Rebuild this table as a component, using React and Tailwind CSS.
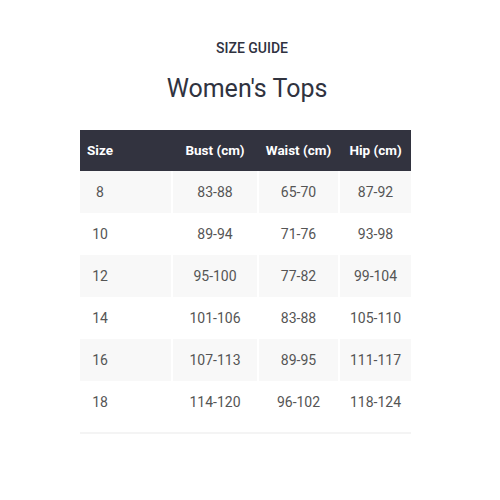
const rows = [
  ["8", "83-88", "65-70", "87-92"],
  ["10", "89-94", "71-76", "93-98"],
  ["12", "95-100", "77-82", "99-104"],
  ["14", "101-106", "83-88", "105-110"],
  ["16", "107-113", "89-95", "111-117"],
  ["18", "114-120", "96-102", "118-124"],
];

const cols = "grid grid-cols-[91px_84px_79px_71px] gap-x-[2px]";

export default function App() {
  return (
    <div className="w-[500px] h-[500px] bg-white font-['Roboto',sans-serif] pt-[38px]">
      <p className="text-center text-[14px] leading-[20px] font-medium text-[#2f3240] pl-[4px]">SIZE GUIDE</p>
      <h1 className="text-center text-[25px] leading-[30px] text-[#30333f] mt-[16px] pr-[6px]">Women's Tops</h1>

      <div className="ml-[80px] w-[331px] mt-[26px]">
        {/* header */}
        <div className={`${cols} h-[41px] bg-[#32333f] items-center text-white text-[13.5px] font-bold`}>
          <span className="pl-[7px]">Size</span>
          <span className="text-center">Bust (cm)</span>
          <span className="text-center">Waist (cm)</span>
          <span className="text-center">Hip (cm)</span>
        </div>
        {rows.map((r, i) => (
          <div key={i} className={`${cols} h-[42px] text-[14px] text-[#555]`}>
            {r.map((c, j) => (
              <div
                key={j}
                className={`flex items-center ${j === 0 ? "" : "justify-center"} ${i % 2 === 0 ? "bg-[#f8f8f8]" : "bg-white"}`}
              >
                {j === 0 ? <span className="w-[40px] text-center">{c}</span> : c}
              </div>
            ))}
          </div>
        ))}
        <div className="h-[2px] mt-[9px] bg-[#f4f4f4]" />
      </div>
    </div>
  );
}
